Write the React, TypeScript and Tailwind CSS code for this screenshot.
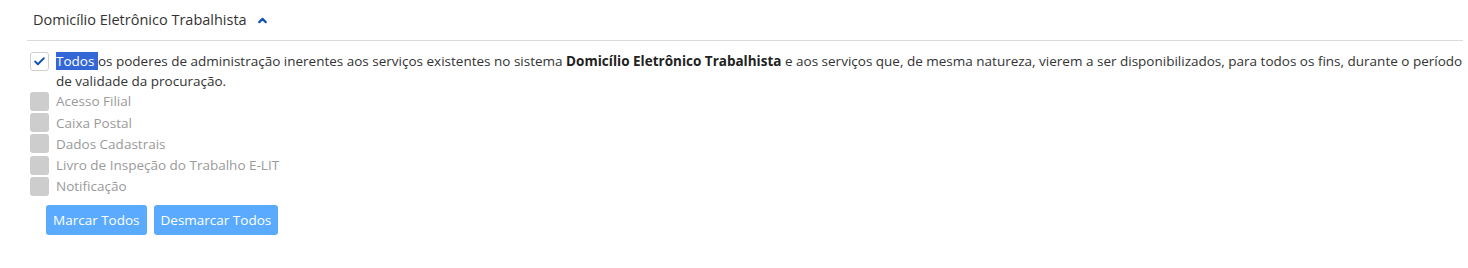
import { ChevronUp, Check } from "lucide-react";

const items = [
  "Acesso Filial",
  "Caixa Postal",
  "Dados Cadastrais",
  "Livro de Inspeção do Trabalho E-LIT",
  "Notificação",
];

export default function App() {
  return (
    <div className="min-h-[268px] bg-white pl-[27px] pr-[5px] text-[#333333]" style={{ fontFamily: '"Open Sans", "Liberation Sans", sans-serif' }}>
      {/* header */}
      <div className="flex h-[41px] items-center gap-[9px] border-b border-[#dcdcdc] pl-[6px]">
        <span className="text-[14.5px] text-[#333]">Domicílio Eletrônico Trabalhista</span>
        <ChevronUp className="h-[13px] w-[13px] text-[#1351b4]" strokeWidth={4} />
      </div>

      <div className="pt-[10px]">
        <div className="flex items-start gap-[7px] pl-[3px]">
          <span className="mt-[1px] flex h-[19px] w-[19px] shrink-0 items-center justify-center rounded-[3px] border border-[#cfcfcf] bg-white">
            <Check className="h-[13px] w-[13px] text-[#1351b4]" strokeWidth={3.5} />
          </span>
          <p className="text-[13.5px] leading-[20px]">
            <span className="bg-[#3367d6] text-white">Todos </span>os poderes de administração inerentes aos serviços existentes no sistema{" "}
            <b className="font-bold text-[#222]">Domicílio Eletrônico Trabalhista</b> e aos serviços que, de mesma natureza, vierem a ser disponibilizados, para todos os fins, durante o período
            <br />
            de validade da procuração.
          </p>
        </div>

        <div className="mt-[1px] flex flex-col gap-[2px] pl-[3px]">
          {items.map((t) => (
            <div key={t} className="flex h-[19.2px] items-center gap-[7px]">
              <span className="h-[19px] w-[19px] shrink-0 rounded-[3px] bg-[#cdcdcd]" />
              <span className="text-[13.5px] text-[#9a9a9a]">{t}</span>
            </div>
          ))}
        </div>

        <div className="mt-[9px] flex gap-[7px] pl-[19px]">
          <button className="h-[30px] rounded-[3px] bg-[#5aabff] px-[7px] text-[13.5px] text-white">Marcar Todos</button>
          <button className="h-[30px] rounded-[3px] bg-[#5aabff] px-[7px] text-[13.5px] text-white">Desmarcar Todos</button>
        </div>
      </div>
    </div>
  );
}
